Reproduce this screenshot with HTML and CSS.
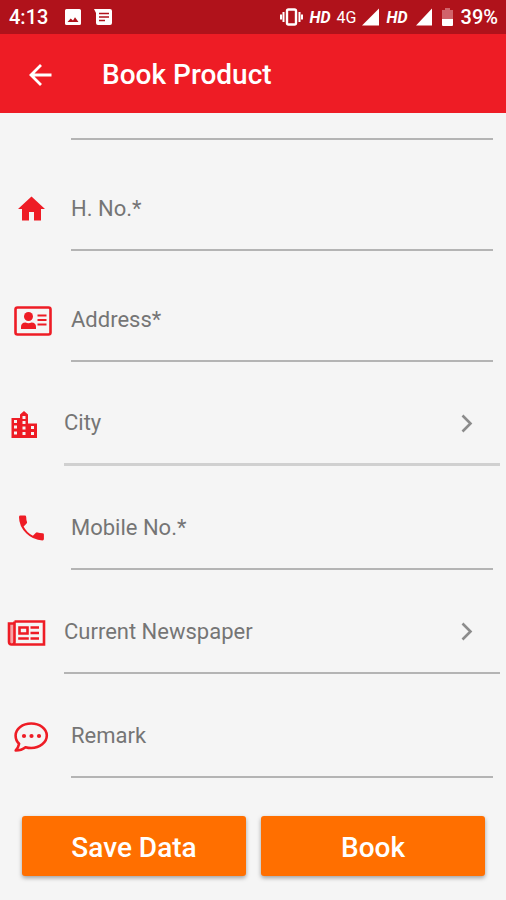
FILE: index.html
```html
<!DOCTYPE html>
<html lang="en">
<head>
  <meta charset="UTF-8" />
  <meta name="viewport" content="width=device-width, initial-scale=1.0"/>
  <title>Book Product</title>
  <link rel="stylesheet" href="styles.css">
</head>
<body>
  <div class="status">
    <span class="clock">4:13</span>
    <svg width="18" height="18" viewBox="0 0 18 18"><path fill="#fff" fill-rule="evenodd" d="M2.500 1h13q1.500 0 1.500 1.500v13q0 1.500-1.500 1.500h-13Q1 17 1 15.500v-13Q1 1 2.500 1zM3.500 14h11l-3.500-4.700-2 3.200-2.300-2z"/></svg>
    <svg width="20" height="18" viewBox="0 0 20 18"><path fill="#fff" d="M0 1h16q2 0 2 2v12q0 2-2 2H4q-2 0-2-2V5z"/><path stroke="#b0121b" stroke-width="1.500" d="M5 5.500h10M5 9h10M5 12.500h6"/></svg>
    <div class="status-right">
      <svg width="25" height="18" viewBox="0 0 25 18"><rect x="8" y="1.500" width="9" height="15" rx="1.500" fill="none" stroke="#fff" stroke-width="2.400"/><path stroke="#fff" stroke-width="2" d="M4.500 4v10M20.500 4v10M2 6.500v5M23 6.500v5"/></svg>
      <span class="hd">HD</span>
      <span class="net">4G</span>
      <svg width="18" height="18" viewBox="0 0 18 18"><path fill="#fff" d="M0 17.500L17 .5v17z"/></svg>
      <span class="hd">HD</span>
      <svg width="20" height="18" viewBox="0 0 20 18"><path fill="#fff" d="M2 17.500L18 .5v17z"/></svg>
      <svg width="15" height="20" viewBox="0 0 15 20"><path fill="#d0636b" d="M5 1h5v2h3v10H2V3h3z"/><path fill="#fff" d="M2 12h11v6q0 1-1 1H3q-1 0-1-1z"/></svg>
      <span class="battery">39%</span>
    </div>
  </div>

  <header class="appbar">
    <button class="back" type="button" aria-label="Back">
      <svg width="24" height="24" viewBox="0 0 24 24"><path fill="none" stroke="#fff" stroke-width="2.800" d="M23.500 12H3M13 2L3 12 13 22"/></svg>
    </button>
    <h1>Book Product</h1>
  </header>

  <form>
    <div class="field cut">
      <input type="text" aria-label="Name">
    </div>

    <div class="field tall">
      <svg class="icon" viewBox="0 0 40 40"><path fill="#ee1c25" d="M19.500 7.500L33 20h-4v11.500h-7V23h-5v8.500h-7V20H6z"/></svg>
      <input type="text" placeholder="H. No.*" aria-label="H. No.">
    </div>

    <div class="field tall">
      <svg class="icon" viewBox="0 0 40 40"><rect x="3.500" y="7.500" width="35" height="27" rx="2" fill="none" stroke="#ee1c25" stroke-width="2.600"/><circle cx="16.500" cy="16.500" r="4.500" fill="#ee1c25"/><path fill="#ee1c25" d="M9 29v-2q0-4.500 4.500-4.500 3 1.500 6 0Q24 22.500 24 27v2z"/><path stroke="#ee1c25" stroke-width="1.800" d="M25.500 15.500h9M25.500 20h9M25.500 24.500h9"/></svg>
      <input type="text" placeholder="Address*" aria-label="Address">
    </div>

    <div class="field picker city">
      <svg class="icon" viewBox="0 0 40 40"><path fill="#ee1c25" fill-rule="evenodd" d="M5.500 14H14v-3.500L18 7l4 3.500v9h9V34H5.500zM8 16v3h3v-3zM8 21.500v3h3v-3zM8 27.500v3h3v-3zM16.500 12v3h3v-3zM16.500 17v3h3v-3zM16.500 22.500v3h3v-3zM16.500 28v3h3v-3zM25 22v3h3v-3zM25 28v3h3v-3z"/></svg>
      <div class="pick">
        <select aria-label="City"><option>City</option></select>
        <svg width="12" height="20" viewBox="0 0 12 20"><path fill="none" stroke="#8c8c8c" stroke-width="2.600" d="M1.500 2.500L9.500 10.500 1.500 18.500"/></svg>
      </div>
    </div>

    <div class="field">
      <svg class="icon" viewBox="0 0 40 40"><path fill="#ee1c25" d="M8.400 7.500h4.400q1.400 0 1.400 1.400 0 2.600.8 5 .3.900-.4 1.600l-3 3q3.200 6.200 9.300 9.300l3-3q.7-.7 1.600-.4 2.400.8 5 .8 1.400 0 1.400 1.400v4.400q0 1.400-1.400 1.400Q21 32 14.200 25.200 7 18 7 8.900q0-1.400 1.400-1.400z"/></svg>
      <input type="tel" placeholder="Mobile No.*" aria-label="Mobile No.">
    </div>

    <div class="field picker">
      <svg class="icon" viewBox="0 0 40 40"><path fill="#f7a3a6" d="M4 11.500h4v20H4z"/><path fill="none" stroke="#ee1c25" stroke-width="2.600" d="M8.500 9.500h29.500v23H5.500q-2.500 0-2.500-2.500V11.500h5.500M8.500 9.500V30q0 2.500-2.500 2.500"/><path fill="none" stroke="#ee1c25" stroke-width="2.600" d="M13.500 15.500h8v6h-8zM24.500 15.500H33M24.500 21H33M12.200 26.500h10.600M24.500 26.500H33"/></svg>
      <div class="pick">
        <select aria-label="Current Newspaper"><option>Current Newspaper</option></select>
        <svg width="12" height="20" viewBox="0 0 12 20"><path fill="none" stroke="#8c8c8c" stroke-width="2.600" d="M1.500 2.500L9.500 10.500 1.500 18.500"/></svg>
      </div>
    </div>

    <div class="field">
      <svg class="icon" viewBox="0 0 40 40"><path fill="none" stroke="#ee1c25" stroke-width="2.600" stroke-linejoin="round" d="M19.200 7.500c8.600 0 15.600 5.200 15.600 12s-7 12.500-15.600 12.500q-3 0-5.700-.8-4 3.300-9.800 3.300 2.700-2.800 3.400-6.700Q3.600 24.500 3.600 19.500c0-6.800 7-12 15.600-12z"/><circle cx="12" cy="20" r="2.100" fill="#ee1c25"/><circle cx="19.500" cy="20" r="2.100" fill="#ee1c25"/><circle cx="27" cy="20" r="2.100" fill="#ee1c25"/></svg>
      <input type="text" placeholder="Remark" aria-label="Remark">
    </div>

    <div class="actions">
      <button type="button">Save Data</button>
      <button type="button">Book</button>
    </div>
  </form>
</body>
</html>
```
FILE: styles.css
```css
* { box-sizing:border-box; }
body { margin:0; background:#f5f5f5; font-family:Roboto, "Liberation Sans", sans-serif; color:#757575; }
svg { display:block; flex:none; }

.status { display:flex; align-items:center; height:34px; padding:0 8px 0 9px; background:#b0121b; color:#fff; gap:12px; }
.clock, .battery { font-size:20px; font-weight:500; }
.clock { margin-right:4px; }
.status-right { display:flex; align-items:center; gap:6px; margin-left:auto; }
.hd { font-size:16px; font-style:italic; font-weight:700; }
.net { font-size:16px; }

.appbar { display:flex; align-items:center; height:79px; padding:2px 28px 0; background:#ee1c25; color:#fff; }
.back { padding:0; border:0; background:none; cursor:pointer; }
h1 { margin:0 0 0 50px; font-size:28px; font-weight:500; }

.field { display:flex; align-items:flex-end; height:104px; padding:0 13px 0 12px; }
.tall { height:111px; }
.cut { height:27px; padding-left:71px; }
.icon { width:40px; height:40px; margin:0 19px 22px 0; }
input, .pick { flex:1; min-width:0; height:84px; border:0; border-bottom:2px solid #b4b4b4; }
.cut input { height:27px; }
input, select { padding:0; border-radius:0; background:none; font-family:inherit; font-size:22px; color:#757575; outline:none; }
input::placeholder { color:#757575; opacity:1; }

.picker { padding:0 6px; }
.picker .icon { margin-right:18px; }
.pick { display:flex; align-items:center; padding-right:27px; }
.city .pick { border-bottom:3px solid #d0d0d0; }
select { flex:1; min-width:0; height:100%; border:0; appearance:none; }

.actions { display:grid; grid-template-columns:1fr 1fr; gap:15px; padding:38px 21px 24px 22px; }
.actions button { height:60px; padding:2px 0 0; border:0; border-radius:3px; background:#ff6f00; color:#fff; font-family:inherit; font-size:28px; font-weight:500; box-shadow:0 2px 4px rgba(0,0,0,.35); cursor:pointer; }
```
